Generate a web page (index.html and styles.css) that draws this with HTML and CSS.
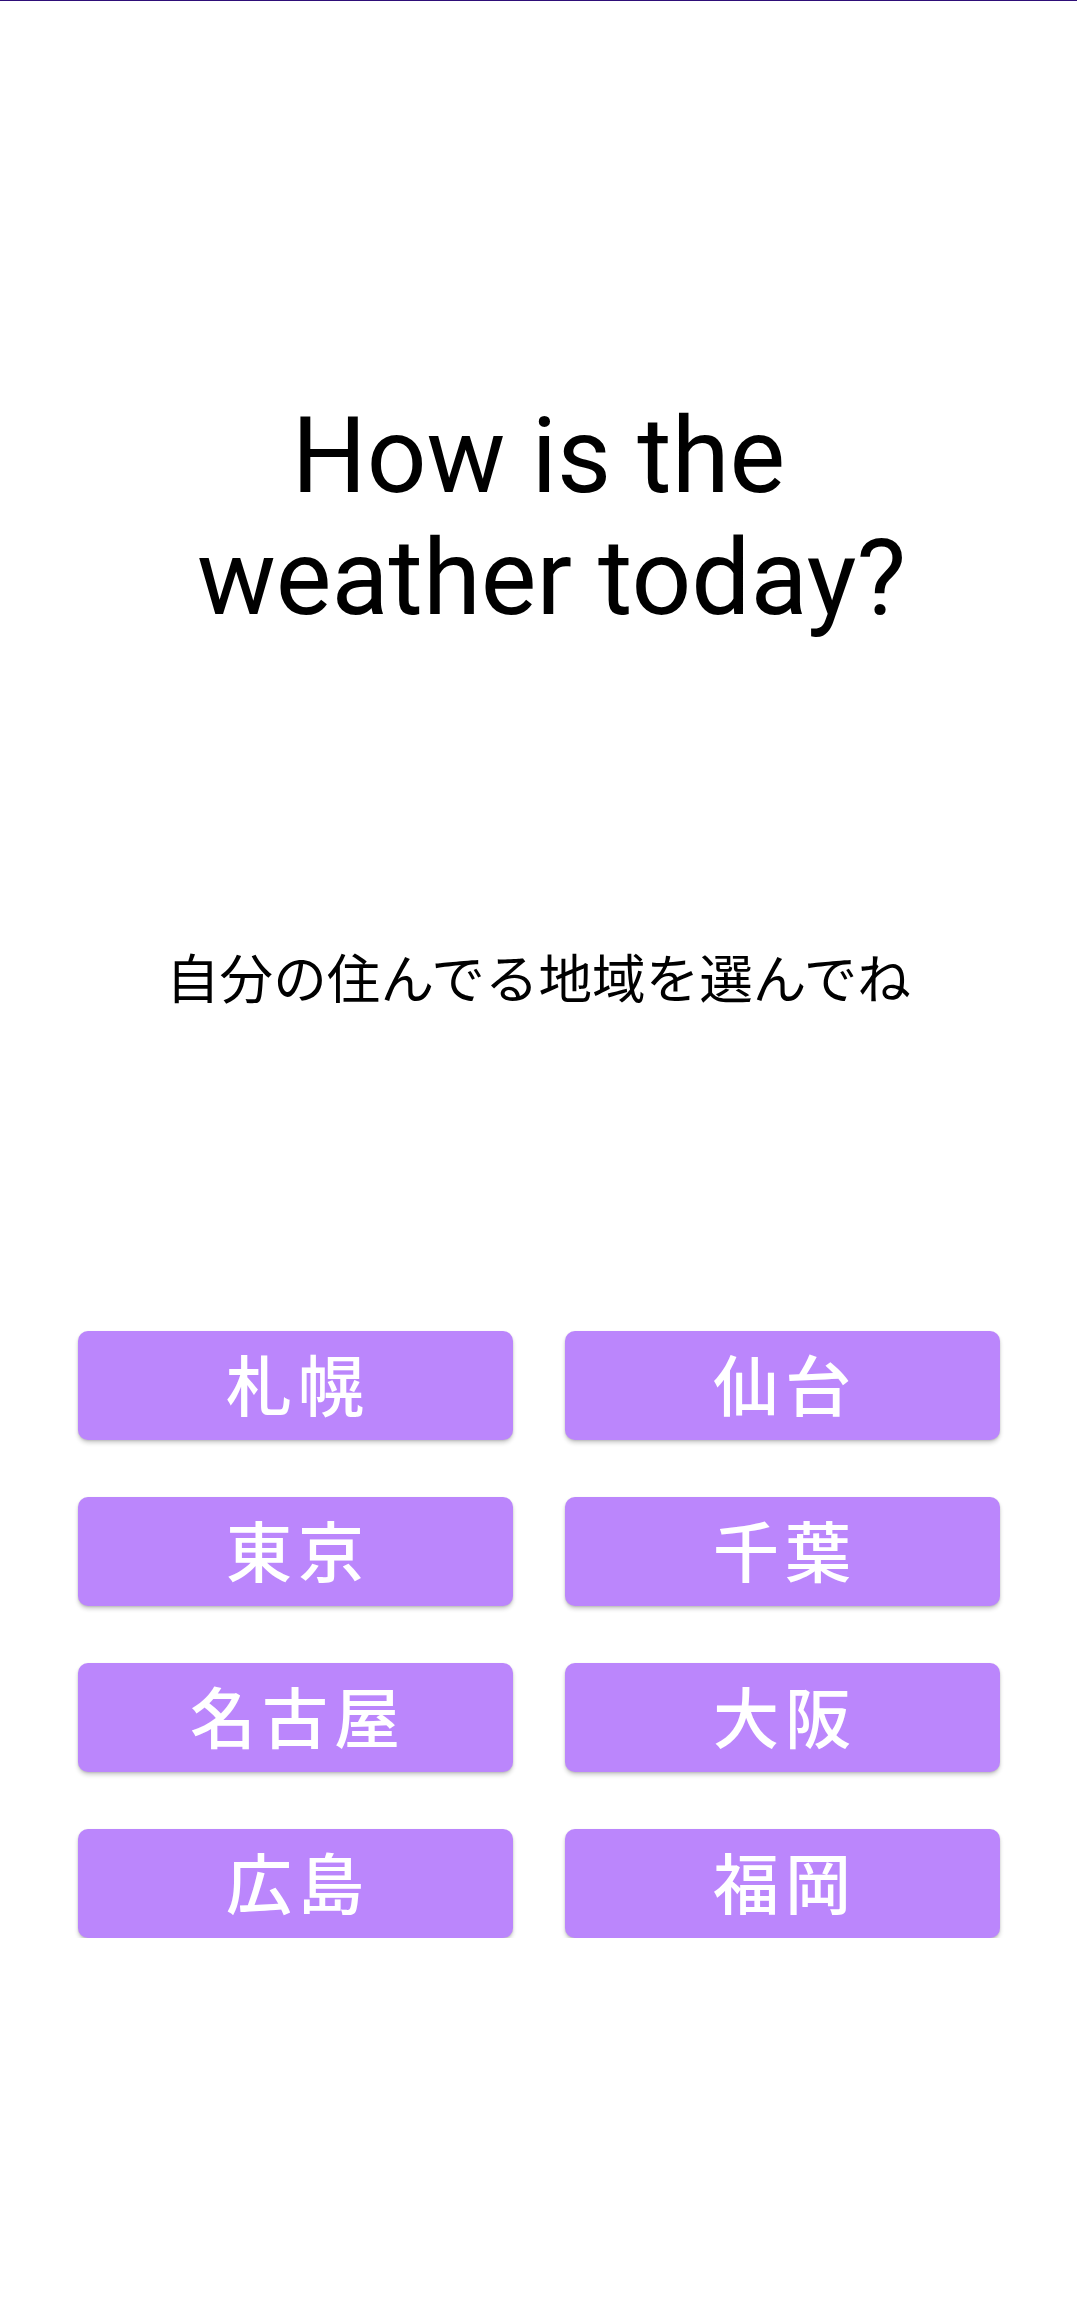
FILE: index.html
```html
<!DOCTYPE html>
<html lang="ja">
<head>
    <meta charset="UTF-8">
    <meta name="viewport" content="width=device-width, initial-scale=1.0">
    <title>Weather</title>
    <link rel="stylesheet" href="styles.css">
</head>
<body>

    <div class="status-line"></div>

    <div class="screen">
        <h1 class="title">How is the<br>&nbsp;weather today?</h1>

        <p class="subtitle">自分の住んでる地域を選んでね</p>

        <div class="areas">
            <button class="area-btn">札幌</button>
            <button class="area-btn">仙台</button>
            <button class="area-btn">東京</button>
            <button class="area-btn">千葉</button>
            <button class="area-btn">名古屋</button>
            <button class="area-btn">大阪</button>
            <button class="area-btn">広島</button>
            <button class="area-btn">福岡</button>
        </div>
    </div>

</body>
</html>
```

FILE: styles.css
```css
body {
    margin: 0;
    background-color: #ffffff;
    font-family: Roboto, "Noto Sans CJK JP", sans-serif;
}
.status-line {
    height: 1px;
    background-color: #2e0e78;
}
.screen {
    display: flex;
    flex-direction: column;
    align-items: center;
}
.title {
    margin: 395px 0 0 0;
    font-size: 105px;
    font-weight: normal;
    line-height: 122px;
    text-align: center;
    color: #000000;
}
.subtitle {
    margin: 298px 0 0 0;
    font-family: "Noto Sans CJK JP", sans-serif;
    font-size: 53.6px;
    line-height: 76px;
    color: #000000;
}
.areas {
    display: grid;
    grid-template-columns: 435px 435px;
    column-gap: 52px;
    row-gap: 57px;
    margin-top: 317px;
}
.area-btn {
    height: 109px;
    padding: 0 0 8px 6px;
    border: none;
    border-radius: 10px;
    background-color: #bb86fc;
    color: #ffffff;
    font-family: Roboto, "Noto Sans CJK JP", sans-serif;
    font-size: 66px;
    font-weight: 500;
    letter-spacing: 6px;
    box-shadow: 0px 3px 4px rgba(0, 0, 0, 0.18), 0px 1px 2px rgba(0, 0, 0, 0.12);
    cursor: pointer;
}
```
